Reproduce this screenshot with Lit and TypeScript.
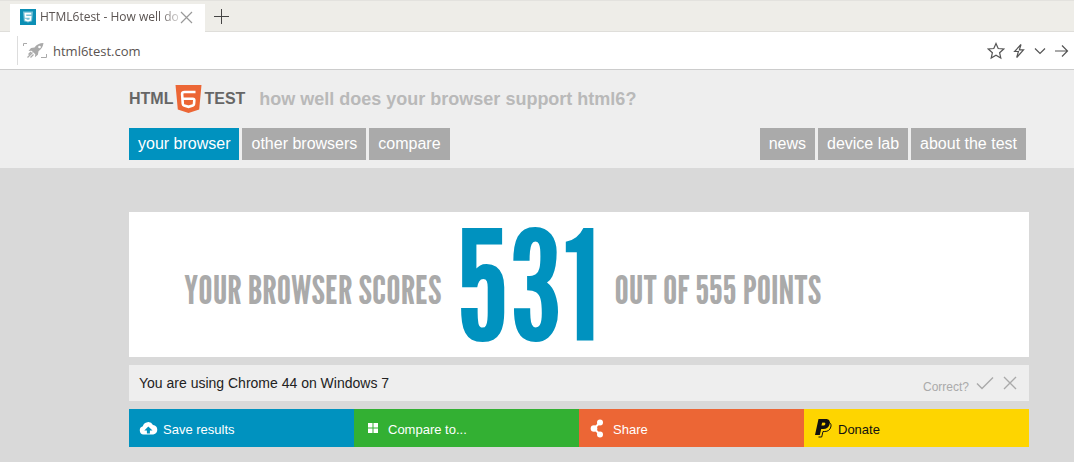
import { LitElement, html, css, svg } from "lit";
import { customElement } from "lit/decorators.js";

const shieldFive = svg`
  <rect width="16" height="16" fill="#0c8fb5"/>
  <path d="M3 2.500h10l-.9 9.800L8 13.600l-4.100-1.300z" fill="#fff" opacity=".45"/>
  <path d="M11.200 4.600H5.300l.3 3.300h5l-.3 3-2.300.8-2.300-.8-.1-1.200" fill="none" stroke="#fff" stroke-width="1.600"/>`;

@customElement("browser-chrome")
export class BrowserChrome extends LitElement {
  static styles = css`
    :host { display: block; color: #5a5351; font-family: "Open Sans", "Noto Sans", sans-serif; }
    svg { display: block; flex: none; }
    button { display: block; padding: 0; border: 0; background: none; color: inherit; }
    .tabs { display: flex; align-items: flex-end; height: 32px; padding-left: 10px; box-sizing: border-box;
      background: #eeede8; border-top: 1px solid #e3e2de; box-shadow: inset 0 -1px #dfdeda; }
    .tab { display: flex; align-items: center; width: 195px; height: 28px; padding: 0 12px 2px 10px;
      box-sizing: border-box; background: #fff; }
    .title { flex: 1; min-width: 0; margin-left: 4px; white-space: nowrap; font-size: 12px;
      line-height: 18px; -webkit-mask-image: linear-gradient(to right, #000 85%, #0003);
      mask-image: linear-gradient(to right, #000 85%, #0003); }
    .close { color: #999; }
    .add { margin: 0 0 8px 9px; color: #444; }
    .bar { display: flex; align-items: center; height: 38px; padding: 0 4px 0 17px; box-sizing: border-box;
      background: #fff; border-bottom: 1px solid #ccc; }
    .site { display: flex; align-items: center; height: 29px; padding-left: 5px; border-left: 1px solid #ddd; }
    .url { flex: 1; min-width: 0; padding: 0; margin-left: 5px; border: 0; outline: 0; background: none;
      color: #5a5351; font: 13px/20px "Open Sans", "Noto Sans", sans-serif; }
    .tools { display: flex; align-items: center; gap: 5px; color: #555; }
  `;

  render() {
    return html`
      <div class="tabs">
        <div class="tab">
          <svg width="16" height="16" viewBox="0 0 16 16">${shieldFive}</svg>
          <span class="title">HTML6test - How well do</span>
          <button class="close" aria-label="Close tab">
            <svg width="13" height="13" viewBox="0 0 13 13" fill="none" stroke="currentColor" stroke-width="1.200"><path d="M1 1l11 11M12 1L1 12"/></svg>
          </button>
        </div>
        <button class="add" aria-label="New tab">
          <svg width="15" height="15" viewBox="0 0 15 15" fill="none" stroke="currentColor"><path d="M7.500 0v15M0 7.500h15"/></svg>
        </button>
      </div>
      <div class="bar">
        <div class="site">
          <svg width="25" height="17" viewBox="0 0 25 17">
            <path d="M.5 4V1.500H4M23.500 12v3.500H18" fill="none" stroke="#aaa"/>
            <path d="M20.500 1c-4 0-7 1.500-9 4.500L8 6 5.500 9l3-.3 3.800 3.500-.4 3 3-2.400.6-3.600c3-2 4.500-4.500 5-8.200z" fill="#aaa"/>
            <circle cx="16.500" cy="5" r="1.300" fill="#fff"/>
            <path d="M9.500 10.500l-5 5M8 10l-2.500 2.500M10.500 12.500L7.500 15.500" stroke="#aaa" stroke-width="1.300"/>
          </svg>
        </div>
        <input class="url" type="text" aria-label="Address" value="html6test.com">
        <div class="tools">
          <button aria-label="Bookmark"><svg width="18" height="18" viewBox="0 0 18 18" fill="none" stroke="currentColor" stroke-width="1.200"><path d="M9 1.500l2.200 5 5.500.5-4.100 3.700 1.200 5.400L9 13.300l-4.800 2.800 1.200-5.400L1.300 7l5.500-.5z"/></svg></button>
          <button aria-label="Quick actions"><svg width="18" height="18" viewBox="0 0 18 18" fill="none" stroke="currentColor" stroke-width="1.200"><path d="M11 2.500L4.600 9.500h3.800L6.700 15.500l6.800-7.600H9.400z"/></svg></button>
          <button aria-label="More"><svg width="14" height="18" viewBox="0 0 14 18" fill="none" stroke="currentColor" stroke-width="1.200"><path d="M2 6.500l5 5 5-5"/></svg></button>
          <button aria-label="Go"><svg width="18" height="18" viewBox="0 0 18 18" fill="none" stroke="currentColor" stroke-width="1.200"><path d="M3 9h12.500M10 3.500L15.500 9 10 14.500"/></svg></button>
        </div>
      </div>`;
  }
}

const actions = [
  { label: "Save results", tone: "blue", icon: svg`<path fill="currentColor" fill-rule="evenodd" d="M4.500 15.500a4.200 4.200 0 0 1-.7-8.200A5.500 5.500 0 0 1 14 6a4.800 4.800 0 0 1 .3 9.500zM9.300 7.500l-4 4h2.600v3h3v-3h2.600z"/>` },
  { label: "Compare to...", tone: "green", icon: svg`<path fill="currentColor" d="M4 4h4.500v4.500H4zM9.500 4h4.500v4.500h-4.500zM4 9.500h4.500v4.500H4zM9.500 9.500h4.500v4.500h-4.500z"/>` },
  { label: "Share", tone: "orange", icon: svg`<g fill="currentColor"><circle cx="11" cy="3.500" r="3"/><circle cx="5" cy="9.500" r="3.300"/><circle cx="11" cy="15.500" r="3"/><path d="M11 3.500L5 9.500l6 6" fill="none" stroke="currentColor" stroke-width="2"/></g>` },
  { label: "Donate", tone: "yellow", icon: svg`<path d="M5 3h8c3.500 0 4.600 2.300 3.800 5-.8 3-3 4.500-6 4.500H9L7.700 18H4.500" fill="none" stroke="currentColor"/><path fill="currentColor" fill-rule="evenodd" d="M4.500 0h7.200c3.500 0 4.700 2.200 3.900 5.200-.8 3.200-3 4.800-6.300 4.800H7.200L5.800 16H1zM8.200 3.300L7.500 6.600h1.700c1.200 0 1.900-.5 2.100-1.700.2-1-.3-1.600-1.400-1.600z"/>` },
];

@customElement("app-root")
export class AppRoot extends LitElement {
  static styles = css`
    :host { display: block; min-height: 100vh; background: #d9d9d9; font-family: "Liberation Sans", Arial, sans-serif; }
    svg { display: block; flex: none; }
    a { text-decoration: none; }
    header, main { padding: 0 45px 0 129px; }
    header { background: #eee; padding-top: 13px; padding-bottom: 8px; }
    .brand { display: flex; align-items: center; height: 32px; }
    .logo { display: flex; align-items: center; gap: 1px; color: #666; font-size: 16px; font-weight: bold; }
    .tagline { margin: 0 0 0 14px; color: #b9b9b9; font-size: 18px; line-height: 24px; font-weight: bold; }
    nav { display: flex; flex-wrap: wrap; justify-content: space-between; margin: 13px 3px 0 0; }
    .links { display: flex; gap: 3px; }
    .link { padding: 0 9px; background: #aaa; color: #fff; font-size: 16px; line-height: 32px; }
    .current { background: #0092bf; }
    main { display: flex; flex-direction: column; gap: 8px; padding-top: 44px; }
    .score { display: flex; align-items: center; min-height: 145px; margin: 0; padding-left: 55px; gap: 15px;
      box-sizing: border-box; background: #fff; color: #aaa; white-space: nowrap;
      font: normal 40px/40px "League Gothic", "Liberation Sans Narrow", sans-serif; }
    .caption { padding-top: 8px; }
    .points { color: #0092bf; font-size: 153px; line-height: 144px; font-weight: normal; }
    .agent { display: flex; align-items: center; justify-content: space-between; height: 36px; padding: 0 10px;
      background: #eee; color: #222; font-size: 14px; }
    .verify { display: flex; align-items: center; gap: 7px; color: #aaa; font-size: 12px; }
    .verify button { padding: 0; border: 0; background: none; color: inherit; }
    .question { padding-top: 7px; }
    .actions { display: grid; grid-template-columns: repeat(4, 1fr); }
    .action { display: flex; align-items: center; gap: 5px; height: 38px; padding: 0 10px; color: #fff; font-size: 13px; }
    .label { padding-top: 2px; }
    .blue { background: #0092bf; }
    .green { background: #33b033; }
    .orange { background: #ec6635; }
    .yellow { background: #fed500; color: #111; }
  `;

  render() {
    return html`
      <browser-chrome></browser-chrome>
      <header>
        <div class="brand">
          <a class="logo" href="#" aria-label="HTML6TEST">
            <span>HTML</span>
            <svg width="29" height="30" viewBox="0 0 29 30">
              <path d="M1.500 1h26l-2.300 24.500L14.500 29 3.800 25.500z" fill="#ec6635"/>
              <path d="M21.500 8H10.500Q8 8 8.100 10l.7 10q.1 1.200 1.200 1.500l4.500 1.300 4.400-1.300q1-.3 1.100-1.300l.3-3.700q.1-1.700-1.500-1.700H8.500" fill="none" stroke="#fff" stroke-width="2.600"/>
            </svg>
            <span>TEST</span>
          </a>
          <h1 class="tagline">how well does your browser support html6?</h1>
        </div>
        <nav>
          <div class="links">
            <a class="link current" href="#">your browser</a>
            <a class="link" href="#">other browsers</a>
            <a class="link" href="#">compare</a>
          </div>
          <div class="links">
            <a class="link" href="#">news</a>
            <a class="link" href="#">device lab</a>
            <a class="link" href="#">about the test</a>
          </div>
        </nav>
      </header>
      <main>
        <h2 class="score"><span class="caption">YOUR BROWSER SCORES</span><strong class="points">531</strong><span class="caption">OUT OF 555 POINTS</span></h2>
        <div class="agent">
          <span>You are using Chrome 44 on Windows 7</span>
          <div class="verify">
            <span class="question">Correct?</span>
            <button aria-label="Yes"><svg width="18" height="14" viewBox="0 0 18 14" fill="none" stroke="currentColor" stroke-width="1.400"><path d="M1 7.500l5 5L17 1.500"/></svg></button>
            <button aria-label="No"><svg width="18" height="14" viewBox="0 0 18 14" fill="none" stroke="currentColor" stroke-width="1.400"><path d="M3 1l12 12M15 1L3 13"/></svg></button>
          </div>
        </div>
        <div class="actions">
          ${actions.map(a => html`<a class="action ${a.tone}" href="#"><svg width="19" height="19" viewBox="0 0 19 19">${a.icon}</svg><span class="label">${a.label}</span></a>`)}
        </div>
      </main>`;
  }
}
